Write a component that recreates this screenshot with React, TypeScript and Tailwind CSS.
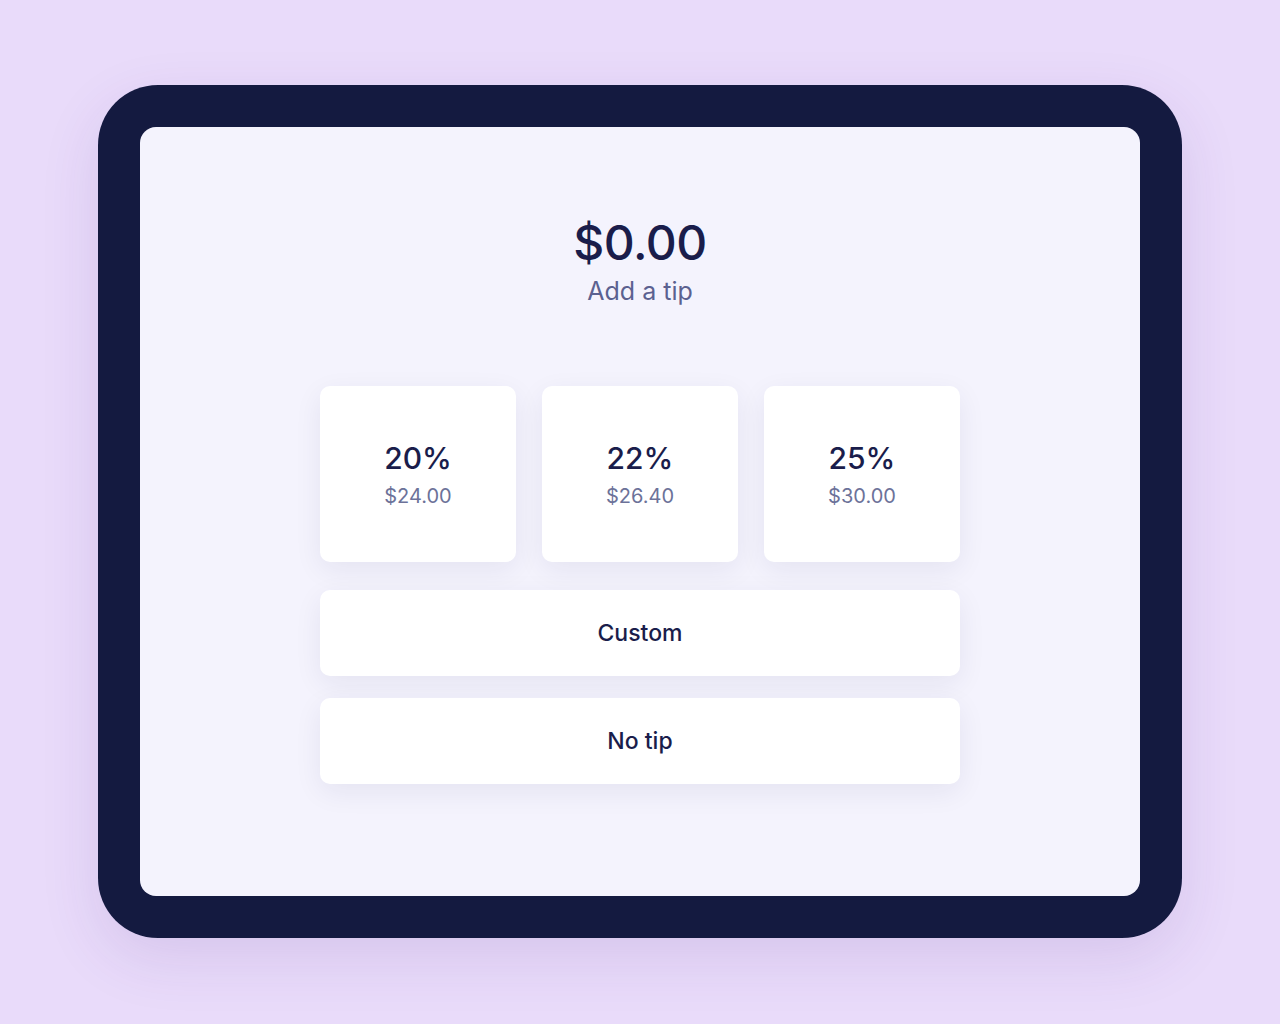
const tips = [
  { pct: "20%", amount: "$24.00" },
  { pct: "22%", amount: "$26.40" },
  { pct: "25%", amount: "$30.00" },
];

export default function App() {
  return (
    <div
      className="w-full h-[1024px] bg-[#e9dbfa] pt-[85px] pl-[98px]"
      style={{ fontFamily: "Inter, 'Noto Sans', sans-serif" }}
    >
      {/* Tablet frame */}
      <div className="w-[1084px] h-[853px] bg-[#141a40] rounded-[60px] p-[42px] shadow-[0_20px_60px_rgba(80,40,140,0.12)]">
        <div className="w-full h-full bg-[#f4f3fd] rounded-[16px] flex flex-col items-center pt-[88px]">
          <h1 className="text-[48px] leading-[56px] font-medium text-[#1a1d4b] tracking-[-0.5px]">$0.00</h1>
          <p className="mt-[4px] text-[25px] leading-[32px] text-[#5b6190]">Add a tip</p>

          <div className="mt-[79px] w-[640px] flex flex-col gap-[28px]">
            <div className="flex gap-[26px]">
              {tips.map((t) => (
                <button
                  key={t.pct}
                  className="w-[196px] h-[176px] bg-white rounded-[10px] flex flex-col items-center justify-center shadow-[0_8px_28px_rgba(30,30,80,0.07)]"
                >
                  <span className="text-[30px] leading-[36px] font-medium text-[#1a1d4b]">{t.pct}</span>
                  <span className="mt-[8px] text-[20px] leading-[24px] text-[#6c7299]">{t.amount}</span>
                </button>
              ))}
            </div>
            <div className="flex flex-col gap-[22px]">
              <button className="h-[86px] bg-white rounded-[10px] text-[23px] font-medium text-[#1a1d4b] shadow-[0_8px_28px_rgba(30,30,80,0.07)]">
                Custom
              </button>
              <button className="h-[86px] bg-white rounded-[10px] text-[23px] font-medium text-[#1a1d4b] shadow-[0_8px_28px_rgba(30,30,80,0.07)]">
                No tip
              </button>
            </div>
          </div>
        </div>
      </div>
    </div>
  );
}
